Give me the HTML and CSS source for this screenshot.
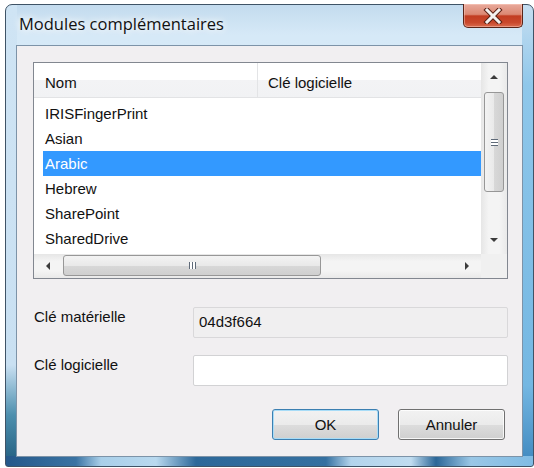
FILE: index.html
```html
<!DOCTYPE html>
<html lang="fr">
<head>
  <meta charset="UTF-8" />
  <title>Modules complémentaires</title>
  <link rel="stylesheet" href="styles.css">
</head>
<body>

  <div class="window">
    <div class="titlebar">
      <span class="title">Modules complémentaires</span>
      <div class="close">
        <svg width="20" height="16" viewBox="0 0 20 16">
          <path d="M4 2 L16 14 M16 2 L4 14" stroke="#5a2115" stroke-width="5" stroke-linecap="square"/>
          <path d="M4 2 L16 14 M16 2 L4 14" stroke="#f4f1f0" stroke-width="3" stroke-linecap="square"/>
        </svg>
      </div>
    </div>

    <div class="client">
      <div class="listview">
        <div class="lv-body">
          <div class="lv-header">
            <div class="col col-name">Nom</div>
            <div class="col col-key">Clé logicielle</div>
          </div>
          <ul class="lv-items">
            <li>IRISFingerPrint</li>
            <li>Asian</li>
            <li class="selected">Arabic</li>
            <li>Hebrew</li>
            <li>SharePoint</li>
            <li>SharedDrive</li>
          </ul>
        </div>

        <div class="vscroll">
          <div class="sb-btn"><span class="arrow up"></span></div>
          <div class="sb-track">
            <div class="thumb v-thumb"><span class="grip"></span></div>
          </div>
          <div class="sb-btn"><span class="arrow down"></span></div>
        </div>

        <div class="hscroll">
          <div class="sb-btn"><span class="arrow left"></span></div>
          <div class="sb-track">
            <div class="thumb h-thumb"><span class="grip"></span></div>
          </div>
          <div class="sb-btn"><span class="arrow right"></span></div>
        </div>
        <div class="corner"></div>
      </div>

      <div class="form">
        <label>Clé matérielle</label>
        <div class="field readonly">04d3f664</div>
        <label>Clé logicielle</label>
        <div class="field"></div>
      </div>

      <div class="buttons">
        <button class="btn default">OK</button>
        <button class="btn">Annuler</button>
      </div>
    </div>
  </div>

</body>
</html>
```

FILE: styles.css
```css
body {
  margin: 0;
  padding: 0;
  background: #fff;
  font-family: "Liberation Sans", Arial, sans-serif;
  font-size: 15px;
  color: #111;
}

.window {
  box-sizing: border-box;
  width: 529px;
  height: 463px;
  margin: 4px 0 0 5px;
  padding: 0 10px 9px 10px;
  border: 1px solid #3f5366;
  border-radius: 7px 7px 3px 3px;
  display: flex;
  flex-direction: column;
  background:
    linear-gradient(to right, #25588a 0, #3a73a3 70px, #a9cfe9 95px, #b9d9ef 150px, #2d6899 190px, #3570a0 320px, #b3d4ec 345px, #c0dcf0 405px, #2b6697 430px, #9ac7e6 465px, #7fbbe4 529px) left bottom / 100% 10px no-repeat,
    linear-gradient(to bottom, #cfe4f4 0, #c9e0f2 360px, #4d8fae 410px, #1f5a7c 463px) left top / 11px 100% no-repeat,
    linear-gradient(to bottom, #c6def1 0, #8fc7ea 80px, #74b7e2 380px, #3d86bd 463px) right top / 11px 100% no-repeat,
    linear-gradient(to bottom, #c3dbee 0, #d6e9f7 30px, #cfe4f4 100%);
}

.titlebar {
  height: 40px;
  display: flex;
  align-items: flex-start;
  justify-content: space-between;
}

.title {
  font-family: "Open Sans", sans-serif;
  font-size: 16.5px;
  line-height: 22px;
  padding: 8px 0 0 3px;
  color: #111;
  text-shadow: 0 0 6px #fff, 0 0 10px #fff;
}

.close {
  width: 58px;
  height: 23px;
  margin-top: -1px;
  border: 1px solid #5a2418;
  border-top: none;
  border-radius: 0 0 5px 5px;
  background: linear-gradient(to bottom, #e8aa9c 0, #dc8873 45%, #c23d22 52%, #c9482c 80%, #d96b4e 100%);
  box-shadow: inset 0 0 0 1px rgba(255, 210, 200, 0.45);
  display: flex;
  align-items: center;
  justify-content: center;
}

.client {
  flex: 1;
  box-sizing: border-box;
  border: 1px solid #7d93a8;
  background: #f1eff1;
  display: flex;
  flex-direction: column;
  padding: 16px 14px 16px 16px;
}

/* list view */
.listview {
  height: 217px;
  box-sizing: border-box;
  border: 1px solid #828790;
  background: #fff;
  display: grid;
  grid-template-columns: 1fr 26px;
  grid-template-rows: 1fr 24px;
}

.lv-body {
  overflow: hidden;
}

.lv-header {
  display: flex;
  height: 34px;
  border-bottom: 1px solid #e2e3e5;
  background: linear-gradient(to bottom, #fff 0, #fff 50%, #f3f3f5 50%, #f1f2f4 100%);
  line-height: 40px;
}

.col {
  box-sizing: border-box;
  height: 100%;
}

.col-name {
  width: 224px;
  padding-left: 11px;
  border-right: 1px solid #e3e4e6;
}

.col-key {
  padding-left: 10px;
}

.lv-items {
  list-style: none;
  margin: 0;
  padding: 3px 0 0 9px;
}

.lv-items li {
  height: 25px;
  line-height: 25px;
  padding-left: 2px;
}

.lv-items li.selected {
  background: #3399ff;
  color: #fff;
}

/* scrollbars */
.vscroll, .hscroll {
  display: flex;
  background: linear-gradient(to right, #e6e6e6, #f4f4f4 30%, #f4f4f4 70%, #e9e9e9);
}

.vscroll {
  flex-direction: column;
  grid-row: 1;
  grid-column: 2;
}

.hscroll {
  grid-row: 2;
  grid-column: 1;
  background: linear-gradient(to bottom, #e6e6e6, #f4f4f4 30%, #f4f4f4 70%, #e9e9e9);
}

.corner {
  background: #f0f0f0;
}

.sb-btn {
  flex: 0 0 28px;
  display: flex;
  align-items: center;
  justify-content: center;
}

.sb-track {
  flex: 1;
  display: flex;
}

.vscroll .sb-track {
  flex-direction: column;
}

.thumb {
  box-sizing: border-box;
  border: 1px solid #979797;
  border-radius: 3px;
  display: flex;
  align-items: center;
  justify-content: center;
}

.v-thumb {
  height: 100px;
  margin: 1px 3px 0 3px;
  background: linear-gradient(to right, #f3f3f3, #e9e9e9 50%, #d8d8d8 51%, #cfcfcf);
}

.h-thumb {
  width: 258px;
  margin: 1px 0 2px 1px;
  background: linear-gradient(to bottom, #f3f3f3, #e9e9e9 50%, #d8d8d8 51%, #cfcfcf);
}

.v-thumb .grip {
  width: 7px;
  height: 7px;
  background: repeating-linear-gradient(to bottom, #5f6a78 0 1px, #fff 1px 3px);
}

.h-thumb .grip {
  width: 7px;
  height: 7px;
  background: repeating-linear-gradient(to right, #5f6a78 0 1px, #fff 1px 3px);
}

.arrow {
  width: 0;
  height: 0;
  border: 4px solid transparent;
}

.arrow.up {
  border-bottom-color: #3c3c3c;
  border-top: none;
}

.arrow.down {
  border-top-color: #3c3c3c;
  border-bottom: none;
}

.arrow.left {
  border-right-color: #3c3c3c;
  border-left: none;
}

.arrow.right {
  border-left-color: #3c3c3c;
  border-right: none;
}

/* key fields */
.form {
  display: grid;
  grid-template-columns: 160px 1fr;
  grid-auto-rows: 31px;
  row-gap: 17px;
  align-items: center;
  margin-top: 28px;
}

.form label {
  padding-left: 1px;
  margin-top: -12px;
}

.field {
  box-sizing: border-box;
  height: 31px;
  border: 1px solid #d2d2d4;
  border-radius: 2px;
  background: #fff;
  padding: 5px 5px 0 5px;
}

.field.readonly {
  background: #f0eff0;
  border-color: #d9d8da;
}

/* buttons */
.buttons {
  display: flex;
  justify-content: flex-end;
  gap: 19px;
  margin-top: 23px;
  padding-right: 3px;
}

.btn {
  width: 107px;
  height: 31px;
  font-family: "Liberation Sans", Arial, sans-serif;
  font-size: 15px;
  color: #111;
  border: 1px solid #707070;
  border-radius: 3px;
  background: linear-gradient(to bottom, #f2f2f2 0, #ebebeb 50%, #dddddd 51%, #cfcfcf 100%);
  box-shadow: inset 0 0 0 1px rgba(255, 255, 255, 0.8);
  padding: 0;
}

.btn.default {
  border-color: #3c7fb1;
  box-shadow: inset 0 0 0 1px #a7dcf7;
}
```
